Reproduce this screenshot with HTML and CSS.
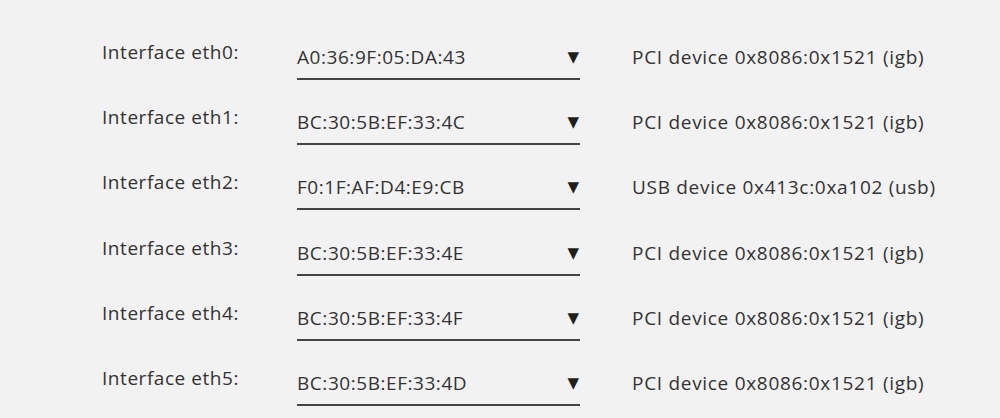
FILE: index.html
```html
<!DOCTYPE html>
<html>
<head>
<meta charset="utf-8">
<link rel="stylesheet" href="styles.css">
</head>
<body>
<div class="list">
  <div class="row">
    <div class="label">Interface eth0:</div>
    <div class="select"><span class="value">A0:36:9F:05:DA:43</span><span class="arrow">▼</span></div>
    <div class="device">PCI device 0x8086:0x1521 (igb)</div>
  </div>
  <div class="row">
    <div class="label">Interface eth1:</div>
    <div class="select"><span class="value">BC:30:5B:EF:33:4C</span><span class="arrow">▼</span></div>
    <div class="device">PCI device 0x8086:0x1521 (igb)</div>
  </div>
  <div class="row">
    <div class="label">Interface eth2:</div>
    <div class="select"><span class="value">F0:1F:AF:D4:E9:CB</span><span class="arrow">▼</span></div>
    <div class="device">USB device 0x413c:0xa102 (usb)</div>
  </div>
  <div class="row">
    <div class="label">Interface eth3:</div>
    <div class="select"><span class="value">BC:30:5B:EF:33:4E</span><span class="arrow">▼</span></div>
    <div class="device">PCI device 0x8086:0x1521 (igb)</div>
  </div>
  <div class="row">
    <div class="label">Interface eth4:</div>
    <div class="select"><span class="value">BC:30:5B:EF:33:4F</span><span class="arrow">▼</span></div>
    <div class="device">PCI device 0x8086:0x1521 (igb)</div>
  </div>
  <div class="row">
    <div class="label">Interface eth5:</div>
    <div class="select"><span class="value">BC:30:5B:EF:33:4D</span><span class="arrow">▼</span></div>
    <div class="device">PCI device 0x8086:0x1521 (igb)</div>
  </div>
</div>
</body>
</html>
```
FILE: styles.css
```css
html, body {
  margin: 0;
  padding: 0;
  background: #f2f2f2;
}
body {
  font-family: "Open Sans", "Noto Sans", sans-serif;
  font-size: 19px;
  letter-spacing: 0.55px;
  color: #333333;
}
.list {
  padding: 30px 0 0 102px;
}
.row {
  display: grid;
  grid-template-columns: 143px 283px auto;
  column-gap: 52px;
  height: 65.2px;
  align-items: start;
}
.label {
  padding-top: 10px;
  line-height: 24px;
}
.select {
  display: flex;
  justify-content: space-between;
  align-items: center;
  padding-top: 15px;
  padding-bottom: 9px;
  line-height: 24px;
  border-bottom: 2px solid #444444;
}
.device {
  padding-top: 15px;
  line-height: 24px;
  letter-spacing: 0.7px;
}
.arrow {
  font-family: "DejaVu Sans", sans-serif;
  font-size: 15px;
  letter-spacing: 0;
  color: #1e1e1e;
  padding-right: 1px;
}
```
